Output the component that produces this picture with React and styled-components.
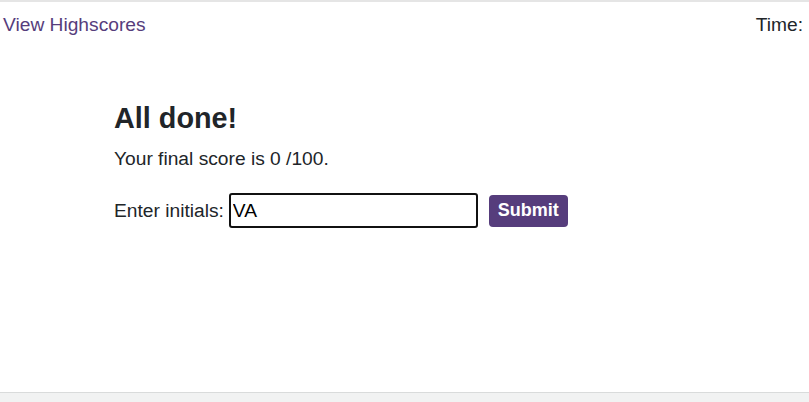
import React, { useState } from "react";
import styled, { createGlobalStyle } from "styled-components";

const GlobalStyle = createGlobalStyle`
  html, body {
    margin: 0;
    padding: 0;
    background: #f1f2f2;
    font-family: "Liberation Sans", Arial, sans-serif;
    color: #212529;
  }
`;

const Page = styled.div`
  background: #fff;
  border-top: 2px solid #e5e5e5;
  border-bottom: 1px solid #d9dbdb;
  height: 393px;
  box-sizing: border-box;
`;

const Header = styled.header`
  display: flex;
  justify-content: space-between;
  align-items: flex-start;
  padding: 11px 6px 0 3px;
  font-size: 19.2px;
  line-height: 23px;
`;

const HighscoreLink = styled.a`
  color: #563d7c;
  text-decoration: none;
`;

const Timer = styled.div`
  color: #212529;
`;

const Card = styled.section`
  padding: 65px 0 0 114px;
`;

const Title = styled.h1`
  margin: 0;
  font-size: 28.8px;
  line-height: 34px;
  font-weight: 700;
`;

const Score = styled.p`
  margin: 12px 0 0;
  font-size: 19.2px;
  line-height: 23px;
`;

const Form = styled.form`
  display: flex;
  align-items: center;
  margin-top: 23px;
  font-size: 19.2px;
`;

const Label = styled.label`
  margin-right: 5px;
`;

const Input = styled.input`
  width: 249px;
  height: 35px;
  box-sizing: border-box;
  border: 2px solid #111;
  border-radius: 3px;
  padding: 0 2px;
  font-family: "Liberation Sans", Arial, sans-serif;
  font-size: 19.2px;
  color: #000;
  outline: none;
`;

const Submit = styled.button`
  margin-left: 11px;
  width: 79px;
  height: 32px;
  padding: 0;
  border: none;
  border-radius: 4px;
  background: #563d7c;
  color: #fff;
  font-family: "Liberation Sans", Arial, sans-serif;
  font-size: 18px;
  font-weight: 700;
`;

export default function App() {
  const [initials, setInitials] = useState("VA");

  return (
    <>
      <GlobalStyle />
      <Page>
        <Header>
          <HighscoreLink href="#none">View Highscores</HighscoreLink>
          <Timer>Time:</Timer>
        </Header>
        <Card>
          <Title>All done!</Title>
          <Score>Your final score is 0 /100.</Score>
          <Form onSubmit={(e) => e.preventDefault()}>
            <Label htmlFor="initials">Enter initials:</Label>
            <Input
              id="initials"
              value={initials}
              onChange={(e) => setInitials(e.target.value)}
            />
            <Submit type="submit">Submit</Submit>
          </Form>
        </Card>
      </Page>
    </>
  );
}
